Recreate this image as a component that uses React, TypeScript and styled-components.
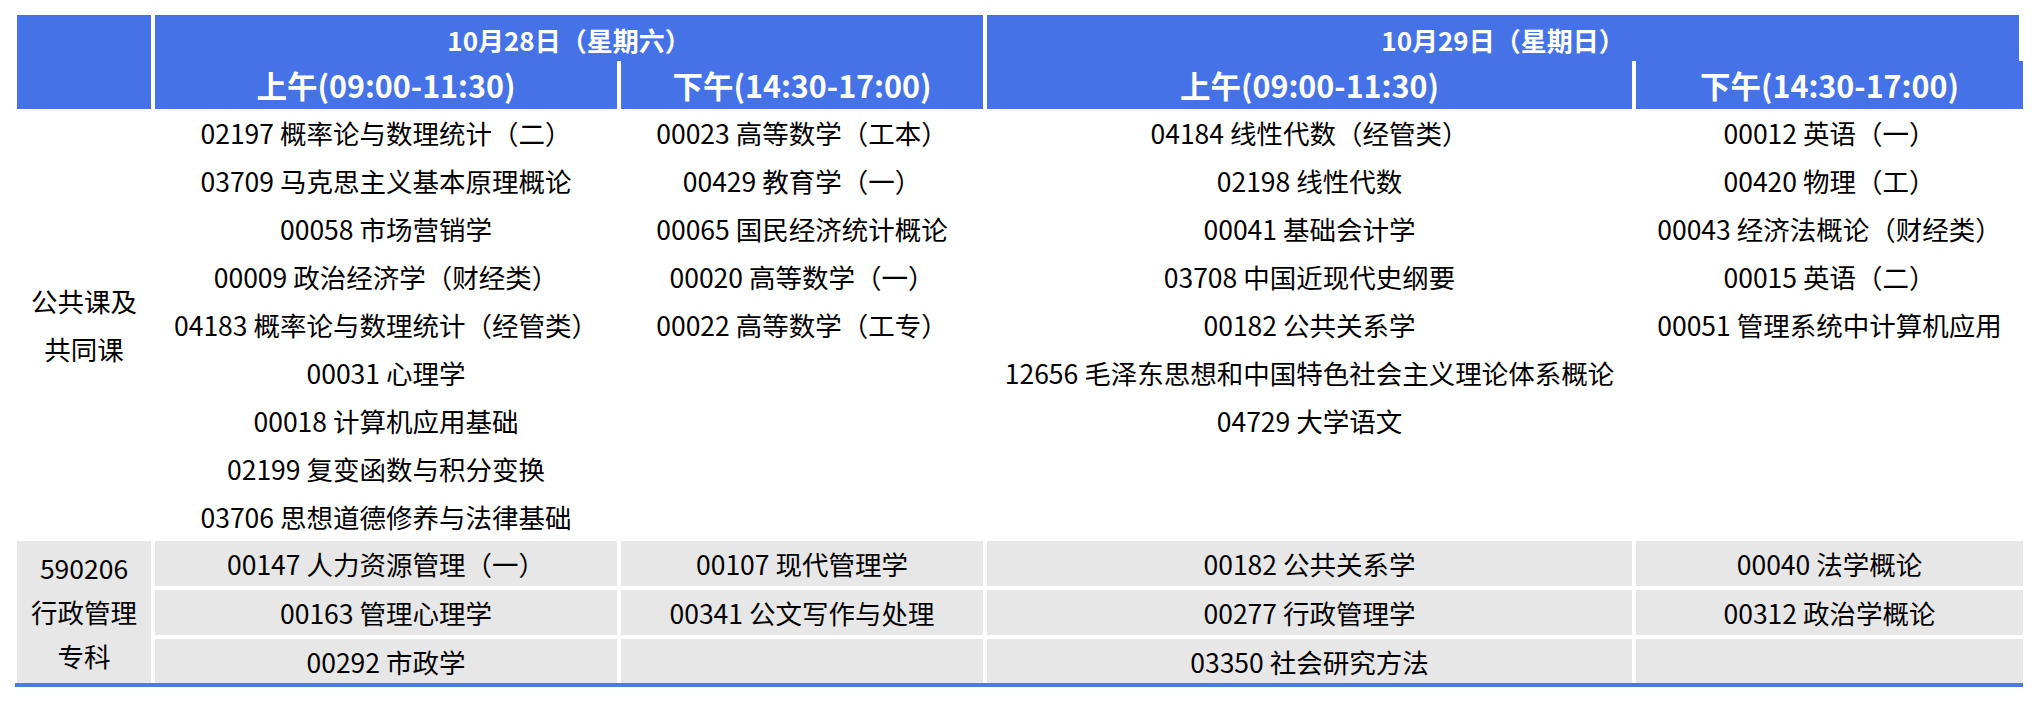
import { styled, createGlobalStyle } from 'styled-components'

const GlobalStyle = createGlobalStyle`
  html, body {
    margin: 0;
    padding: 0;
    background: #ffffff;
  }
  body {
    font-family: "Noto Sans CJK SC", "Noto Sans", sans-serif;
    color: #000000;
  }
`

const COLUMNS = '134px 462px 362px 645px 387px'

type Slot = { label: string; courses: string[] }
type Day = { title: string; slots: Slot[] }

const days: Day[] = [
  {
    title: '10月28日（星期六）',
    slots: [
      {
        label: '上午(09:00-11:30)',
        courses: [
          '02197 概率论与数理统计（二）',
          '03709 马克思主义基本原理概论',
          '00058 市场营销学',
          '00009 政治经济学（财经类）',
          '04183 概率论与数理统计（经管类）',
          '00031 心理学',
          '00018 计算机应用基础',
          '02199 复变函数与积分变换',
          '03706 思想道德修养与法律基础',
        ],
      },
      {
        label: '下午(14:30-17:00)',
        courses: [
          '00023 高等数学（工本）',
          '00429 教育学（一）',
          '00065 国民经济统计概论',
          '00020 高等数学（一）',
          '00022 高等数学（工专）',
        ],
      },
    ],
  },
  {
    title: '10月29日（星期日）',
    slots: [
      {
        label: '上午(09:00-11:30)',
        courses: [
          '04184 线性代数（经管类）',
          '02198 线性代数',
          '00041 基础会计学',
          '03708 中国近现代史纲要',
          '00182 公共关系学',
          '12656 毛泽东思想和中国特色社会主义理论体系概论',
          '04729 大学语文',
        ],
      },
      {
        label: '下午(14:30-17:00)',
        courses: [
          '00012 英语（一）',
          '00420 物理（工）',
          '00043 经济法概论（财经类）',
          '00015 英语（二）',
          '00051 管理系统中计算机应用',
        ],
      },
    ],
  },
]

// rows of the 行政管理 major, one entry per slot column
const majorRows: string[][] = [
  ['00147 人力资源管理（一）', '00107 现代管理学', '00182 公共关系学', '00040 法学概论'],
  ['00163 管理心理学', '00341 公文写作与处理', '00277 行政管理学', '00312 政治学概论'],
  ['00292 市政学', '', '03350 社会研究方法', ''],
]

function App() {
  const slots = days.flatMap((day) => day.slots)

  return (
    <>
      <GlobalStyle />
      <Page>
        <Schedule>
          <HeaderGrid>
            <Corner />
            {days.map((day, i) => (
              <DateCell key={day.title} $trim={i === days.length - 1}>
                {day.title}
              </DateCell>
            ))}
            {slots.map((slot, i) => (
              <SlotCell key={i}>{slot.label}</SlotCell>
            ))}
          </HeaderGrid>

          <PublicGrid>
            <GroupLabel>
              公共课及
              <br />
              共同课
            </GroupLabel>
            {slots.map((slot, i) => (
              <CourseList key={i}>
                {slot.courses.map((course) => (
                  <CourseLine key={course}>{course}</CourseLine>
                ))}
              </CourseList>
            ))}
          </PublicGrid>

          <MajorGrid>
            <MajorLabel>
              <span>590206</span>
              <span>行政管理</span>
              <span>专科</span>
            </MajorLabel>
            {majorRows.map((row, r) =>
              row.map((course, c) => <MajorCell key={`${r}-${c}`}>{course}</MajorCell>)
            )}
          </MajorGrid>

          <BottomRule />
        </Schedule>
      </Page>
    </>
  )
}

export default App

const Page = styled.div`
  width: 2038px;
  height: 702px;
  padding: 15px 0 0 17px;
  box-sizing: border-box;
  overflow: hidden;
`

const Schedule = styled.div`
  width: 2006px;
`

const HeaderGrid = styled.div`
  display: grid;
  grid-template-columns: ${COLUMNS};
  grid-template-rows: 46px 48px;
  column-gap: 4px;
  color: #ffffff;
  font-weight: 700;
  white-space: nowrap;
`

const Corner = styled.div`
  grid-row: 1 / span 2;
  background: #4573e7;
`

const DateCell = styled.div<{ $trim?: boolean }>`
  grid-column: span 2;
  margin-right: ${({ $trim }) => ($trim ? '4px' : '0')};
  display: flex;
  align-items: center;
  justify-content: center;
  background: #4573e7;
  font-size: 26px;
  padding-top: 2px;
`

const SlotCell = styled.div`
  display: flex;
  align-items: center;
  justify-content: center;
  background: #4573e7;
  font-size: 30.5px;
`

const PublicGrid = styled.div`
  display: grid;
  grid-template-columns: ${COLUMNS};
  column-gap: 4px;
  height: 432px;
  font-size: 26.5px;
`

const GroupLabel = styled.div`
  display: flex;
  align-items: center;
  justify-content: center;
  text-align: center;
  line-height: 48px;
`

const CourseList = styled.div`
  display: flex;
  flex-direction: column;
  align-items: center;
`

const CourseLine = styled.div`
  height: 48px;
  line-height: 48px;
  white-space: nowrap;
`

const MajorGrid = styled.div`
  display: grid;
  grid-template-columns: ${COLUMNS};
  grid-template-rows: 45px 45px 44px;
  gap: 4px;
  font-size: 26.5px;
`

const MajorLabel = styled.div`
  grid-row: 1 / span 3;
  display: flex;
  flex-direction: column;
  align-items: center;
  justify-content: center;
  background: #e7e7e7;
  line-height: 44px;
`

const MajorCell = styled.div`
  display: flex;
  align-items: center;
  justify-content: center;
  background: #e7e7e7;
  white-space: nowrap;
`

const BottomRule = styled.div`
  height: 4px;
  margin-left: -2px;
  width: 2008px;
  background: #4a7cd8;
`
